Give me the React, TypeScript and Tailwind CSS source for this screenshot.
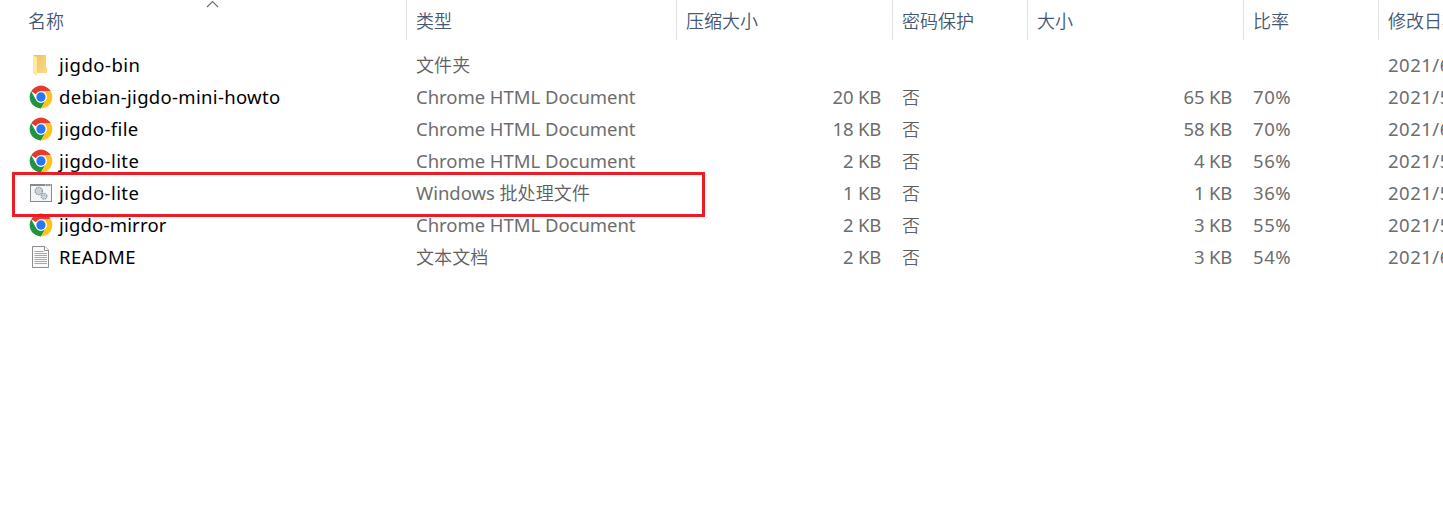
import React from "react";

type Kind = "folder" | "chrome" | "batch" | "text";

interface Entry {
  name: string;
  nameTracking: string;
  kind: Kind;
  typeLatin?: string;
  typeHan?: string;
  packed?: string;
  locked?: string;
  size?: string;
  ratio?: string;
  date: string;
  marked?: boolean;
}

const HTML = "Chrome HTML Document";

const entries: Entry[] = [
  { name: "jigdo-bin", nameTracking: "tracking-[0.5px]", kind: "folder", typeHan: "文件夹", date: "2021/6" },
  { name: "debian-jigdo-mini-howto", nameTracking: "tracking-[0.32px]", kind: "chrome", typeLatin: HTML, packed: "20 KB", locked: "否", size: "65 KB", ratio: "70%", date: "2021/5" },
  { name: "jigdo-file", nameTracking: "tracking-[0.38px]", kind: "chrome", typeLatin: HTML, packed: "18 KB", locked: "否", size: "58 KB", ratio: "70%", date: "2021/6" },
  { name: "jigdo-lite", nameTracking: "tracking-[0.42px]", kind: "chrome", typeLatin: HTML, packed: "2 KB", locked: "否", size: "4 KB", ratio: "56%", date: "2021/5" },
  { name: "jigdo-lite", nameTracking: "tracking-[0.42px]", kind: "batch", typeLatin: "Windows ", typeHan: "批处理文件", packed: "1 KB", locked: "否", size: "1 KB", ratio: "36%", date: "2021/5", marked: true },
  { name: "jigdo-mirror", nameTracking: "tracking-[0.2px]", kind: "chrome", typeLatin: HTML, packed: "2 KB", locked: "否", size: "3 KB", ratio: "55%", date: "2021/5" },
  { name: "README", nameTracking: "tracking-[0.45px]", kind: "text", typeHan: "文本文档", packed: "2 KB", locked: "否", size: "3 KB", ratio: "54%", date: "2021/6" },
];

const COLUMNS = "grid grid-cols-[407px_270px_216px_135px_216px_135px_minmax(0,1fr)]";
const headers = ["名称", "类型", "压缩大小", "密码保护", "大小", "比率", "修改日期"];

function FolderIcon() {
  return (
    <svg width="24" height="24" viewBox="0 0 24 24" className="block">
      <defs>
        <linearGradient id="folderBack" x1="0" y1="0" x2="1" y2="1">
          <stop offset="0" stopColor="#e9c35f" />
          <stop offset="1" stopColor="#fbdc82" />
        </linearGradient>
      </defs>
      <path d="M4 2h13v12.500h1V20H7z" fill="url(#folderBack)" />
      <path d="M4 2l4 2.600v18.400L4 20.500z" fill="#ffe8a3" />
    </svg>
  );
}

function ChromeIcon() {
  return (
    <svg width="24" height="24" viewBox="0 0 48 48" className="block">
      <g transform="translate(1.200 1.200) scale(0.95)">
        <circle cx="24" cy="24" r="23.500" fill="#fff" />
        <path d="M3.220 12A24 24 0 0 1 44.780 12H24A12 12 0 0 0 13.610 18z" fill="#e33b2e" />
        <path d="M3.220 12A24 24 0 0 0 24 48L34.390 30A12 12 0 0 1 13.610 30z" fill="#229342" />
        <path d="M44.780 12A24 24 0 0 1 24 48L34.390 30A12 12 0 0 0 24 12z" fill="#fcc31e" />
        <circle cx="24" cy="24" r="12" fill="#fff" />
        <circle cx="24" cy="24" r="9.800" fill="#2a75f3" />
      </g>
    </svg>
  );
}

function BatchIcon() {
  return (
    <svg width="24" height="24" viewBox="0 0 24 24" className="block">
      <rect x="1.500" y="3.500" width="21" height="17" fill="#f5f6f7" stroke="#868b90" />
      <path d="M1 4h22" stroke="#868b90" strokeWidth="2" />
      <path d="M16 4h1M18.500 4h1M21 4h1" stroke="#fff" />
      <circle cx="9.800" cy="10" r="3.500" fill="#dce3e8" stroke="#8c969e" strokeWidth="1.500" strokeDasharray="1.500 0.700" />
      <circle cx="9.800" cy="10" r="1.200" fill="#fff" stroke="#8c969e" strokeWidth="0.600" />
      <circle cx="15" cy="15.300" r="2.800" fill="#dce8ee" stroke="#8b9aa5" strokeWidth="1.400" strokeDasharray="1.400 0.800" />
      <circle cx="15" cy="15.300" r="1" fill="#fff" stroke="#8b9aa5" strokeWidth="0.600" />
    </svg>
  );
}

function TextIcon() {
  return (
    <svg width="24" height="24" viewBox="0 0 24 24" className="block">
      <path d="M3.500 1.500h12.500l3.500 3.500v17.500h-16z" fill="#fafafa" stroke="#8e8e8e" />
      <path d="M15.500 1.500v4h4" fill="#fff" stroke="#8e8e8e" />
      <path d="M5.500 6.500h9M5.500 8.500h12.500M5.500 10.500h12.500M5.500 12.500h12.500M5.500 14.500h12.500M5.500 16.500h12.500M5.500 18.500h12.500" stroke="#a8a8a8" />
    </svg>
  );
}

const icons: Record<Kind, () => React.JSX.Element> = {
  folder: FolderIcon,
  chrome: ChromeIcon,
  batch: BatchIcon,
  text: TextIcon,
};

function Row({ entry }: { entry: Entry }) {
  const Icon = icons[entry.kind];
  return (
    <div className={`${COLUMNS} relative h-8 items-center text-[18.5px] text-[#6d6d6d]`}>
      <div className="flex items-center pl-[29px] text-black">
        <Icon />
        <span className={`ml-[6px] ${entry.nameTracking}`}>{entry.name}</span>
      </div>
      <div className="whitespace-pre pl-[9px] tracking-[-0.04px]">
        {entry.typeLatin}
        <span className="text-[18px] font-[350] tracking-[0.1px] text-[#606060]">{entry.typeHan}</span>
      </div>
      <div className="pr-3 text-right tracking-[-0.2px]">{entry.packed}</div>
      <div className="pl-[9px] text-[18px] font-[350] text-[#606060]">{entry.locked}</div>
      <div className="pr-3 text-right tracking-[-0.2px]">{entry.size}</div>
      <div className="pl-[9px] tracking-[0.6px]">{entry.ratio}</div>
      <div className="overflow-hidden pl-[9px] tracking-[0.5px]">{entry.date}</div>
      {entry.marked && (
        <div className="absolute -top-[5px] left-3 z-10 h-[45px] w-[693px] border-[3px] border-[#ed1c24]" />
      )}
    </div>
  );
}

export default function App() {
  return (
    <div className="h-[505px] w-full overflow-hidden whitespace-nowrap bg-white font-['Noto_Sans','Noto_Sans_CJK_SC',sans-serif] text-[18px] leading-8">
      <div className={`${COLUMNS} h-10 font-[350] text-[#435873]`}>
        {headers.map((label, i) => (
          <div
            key={label}
            className={`relative border-[#e2e2e2] pt-[5px] ${i === 0 ? "border-r pl-7" : i === 6 ? "overflow-hidden pl-[9px]" : "border-r pl-[9px]"}`}
          >
            {label}
            {i === 0 && (
              <svg width="13" height="8" viewBox="0 0 13 8" className="absolute left-[206px] top-0">
                <path d="M1 7l5.500-5.500L12 7" fill="none" stroke="#6b6b6b" strokeWidth="1.100" />
              </svg>
            )}
          </div>
        ))}
      </div>
      <div className="pt-[9px]">
        {entries.map((entry, i) => (
          <Row key={i} entry={entry} />
        ))}
      </div>
    </div>
  );
}
